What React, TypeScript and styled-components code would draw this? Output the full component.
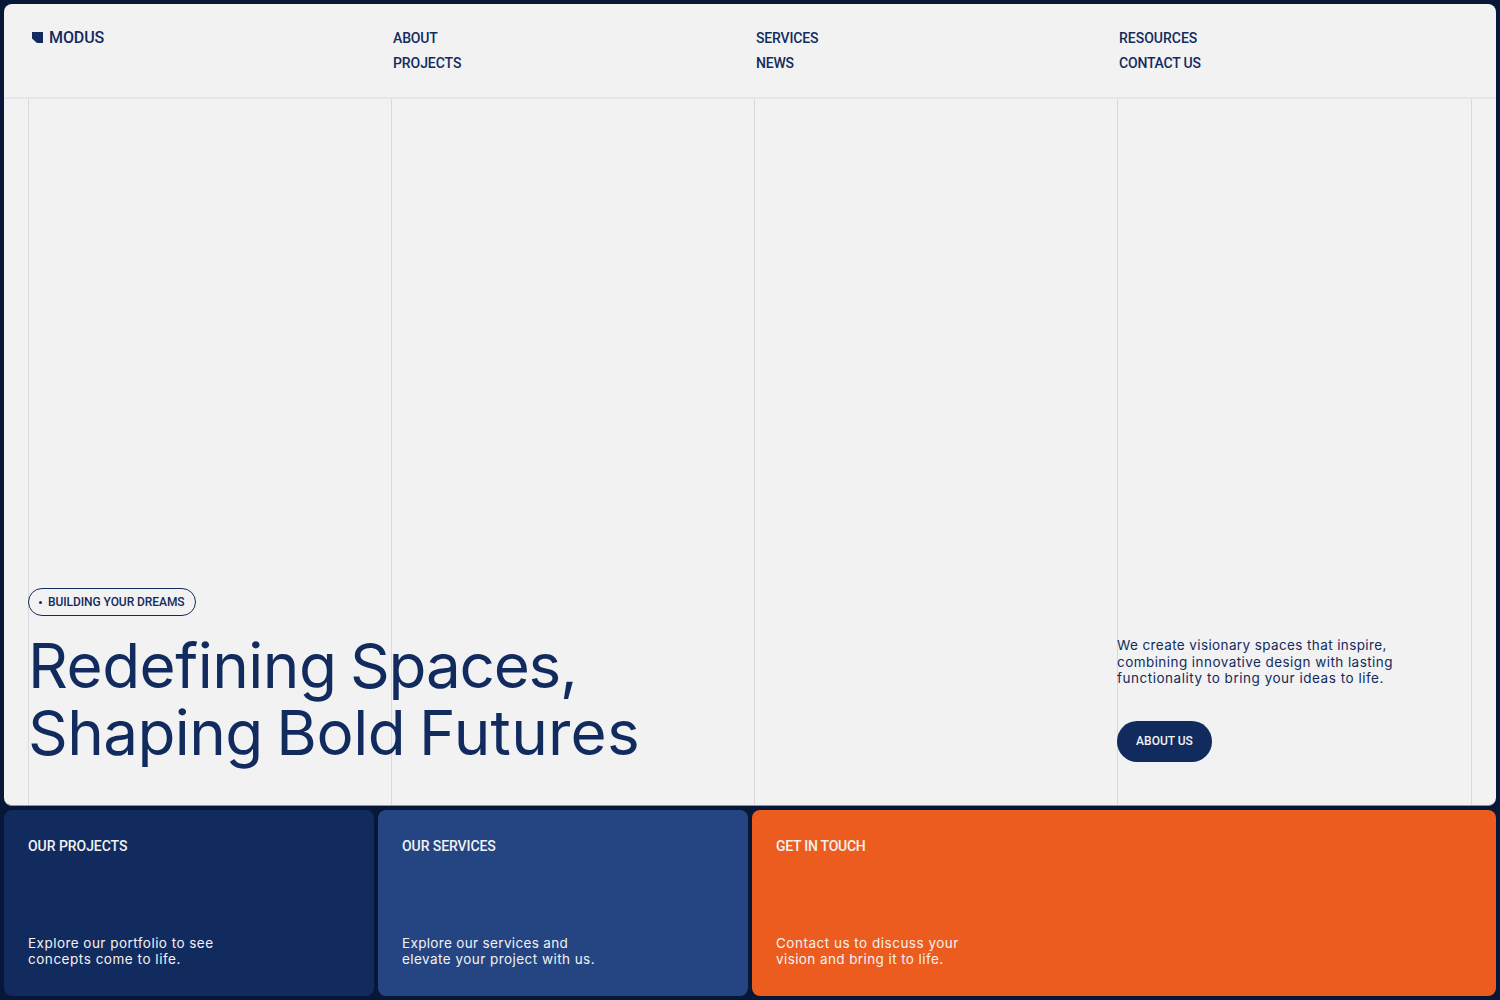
import React, { Fragment } from 'react';
import styled, { createGlobalStyle } from 'styled-components';

const color = {
  page: '#061737',
  paper: '#f2f2f2',
  navy: '#122b5e',
  blue: '#254582',
  orange: '#ec5c1e',
  line: '#dadade',
};

const labelFont = 'Roboto, "Liberation Sans", sans-serif';
const textFont = 'Inter, "Liberation Sans", sans-serif';

const GlobalStyle = createGlobalStyle`
  *, *::before, *::after { box-sizing: border-box; }
  body { margin: 0; background: ${color.page}; }
  h1, h2, p { margin: 0; }
  a { color: inherit; text-decoration: none; }
`;

const Page = styled.div`
  display: flex;
  flex-direction: column;
  gap: 4px;
  height: 1000px;
  padding: 4px;
  background: ${color.page};
  color: ${color.navy};
  font-family: ${textFont};
`;

const Panel = styled.main`
  display: flex;
  flex: 1;
  flex-direction: column;
  overflow: hidden;
  border-bottom: 1px solid #8d94a1;
  border-radius: 8px;
  background: ${color.paper};
`;

const Header = styled.header`
  display: grid;
  grid-template-columns: repeat(4, 1fr);
  column-gap: 8px;
  height: 95px;
  padding: 26px 24px 0;
  border-bottom: 2px solid #e6e6eb;
`;

const Logo = styled.a`
  display: flex;
  align-items: flex-start;
  align-self: start;
  gap: 6px;
  height: 16px;
  padding-left: 4px;
  font: 500 16px/16px ${labelFont};
  letter-spacing: -0.1px;
`;

const LogoMark = styled.svg`
  display: block;
  width: 11px;
  height: 11px;
  margin-top: 2px;
`;

const NavColumn = styled.nav`
  display: flex;
  flex-direction: column;
  align-items: flex-start;
  gap: 8px;
  padding-left: 2px;
`;

const NavLink = styled.a<{ $tracking: number }>`
  font: 500 14px/17px ${labelFont};
  letter-spacing: ${({ $tracking }) => $tracking}px;
`;

const Hero = styled.section`
  display: grid;
  flex: 1;
  padding: 0 24px;
`;

const columns = `
  display: grid;
  grid-area: 1 / 1;
  grid-template-columns: repeat(4, 1fr);
  column-gap: 8px;
`;

const Guides = styled.div`
  ${columns}
`;

const Guide = styled.div`
  border-left: 1px solid ${color.line};

  &:last-child {
    border-right: 1px solid ${color.line};
  }
`;

const HeroContent = styled.div`
  ${columns}
  align-items: end;
`;

const Intro = styled.div`
  display: flex;
  grid-column: span 3;
  flex-direction: column;
  align-items: flex-start;
  gap: 15.6px;
  padding-bottom: 38.2px;
`;

const Badge = styled.div`
  display: flex;
  align-items: center;
  gap: 6px;
  width: 168px;
  height: 28.4px;
  padding: 0 0 0 10px;
  border: 1px solid ${color.navy};
  border-radius: 15px;
  font: 500 12px/14.4px ${labelFont};
  letter-spacing: -0.07px;
  white-space: nowrap;
`;

const Dot = styled.span`
  width: 3px;
  height: 3px;
  border-radius: 50%;
  background: ${color.navy};
`;

const Title = styled.h1`
  font: 400 62px/67.2px ${textFont};
`;

const TitleLine = styled.span`
  display: block;
  word-spacing: -3.9px;
  white-space: nowrap;
`;

const Tracked = styled.span<{ $tracking: number }>`
  letter-spacing: ${({ $tracking }) => $tracking}px;
`;

const Aside = styled.div`
  display: flex;
  flex-direction: column;
  align-items: flex-start;
  gap: 34.1px;
  padding-bottom: 43px;
`;

const Copy = styled.p<{ $leading: number }>`
  font: 400 13.5px ${textFont};
  line-height: ${({ $leading }) => $leading}px;
`;

const CopyLine = styled.span<{ $tracking: number }>`
  display: block;
  letter-spacing: ${({ $tracking }) => $tracking}px;
  white-space: nowrap;
`;

const Button = styled.a`
  display: flex;
  align-items: center;
  justify-content: center;
  width: 95px;
  height: 40.4px;
  border-radius: 20.2px;
  background: ${color.navy};
  color: ${color.paper};
  font: 500 12px/14.4px ${labelFont};
`;

const Cards = styled.section`
  display: grid;
  grid-template-columns: repeat(4, 1fr);
  gap: 4px;
  height: 186.4px;
`;

const Card = styled.a<{ $fill: string; $span?: number }>`
  display: flex;
  grid-column: span ${({ $span = 1 }) => $span};
  flex-direction: column;
  justify-content: space-between;
  padding: 28px 24px 29.2px;
  border-radius: 8px;
  background: ${({ $fill }) => $fill};
  color: ${color.paper};
`;

const CardTitle = styled.h2<{ $tracking: number }>`
  font: 500 14px/17px ${labelFont};
  letter-spacing: ${({ $tracking }) => $tracking}px;
`;

type Line = { text: string; tracking: number };

const nav: Line[][] = [
  [{ text: 'ABOUT', tracking: -0.15 }, { text: 'PROJECTS', tracking: -0.08 }],
  [{ text: 'SERVICES', tracking: -0.15 }, { text: 'NEWS', tracking: -0.2 }],
  [{ text: 'RESOURCES', tracking: 0 }, { text: 'CONTACT US', tracking: -0.2 }],
];

const headline: Line[][] = [
  [{ text: 'Redefining', tracking: -0.5 }, { text: 'Spaces,', tracking: -1.25 }],
  [{ text: 'Shaping', tracking: -0.6 }, { text: 'Bold', tracking: -0.4 }, { text: 'Futures', tracking: 0.25 }],
];

const summary: Line[] = [
  { text: 'We create visionary spaces that inspire,', tracking: 0.387 },
  { text: 'combining innovative design with lasting', tracking: 0.44 },
  { text: 'functionality to bring your ideas to life.', tracking: 0.52 },
];

const cards: { title: Line; fill: string; span?: number; lines: Line[] }[] = [
  {
    title: { text: 'OUR PROJECTS', tracking: -0.05 },
    fill: color.navy,
    lines: [
      { text: 'Explore our portfolio to see', tracking: 0.465 },
      { text: 'concepts come to life.', tracking: 0.532 },
    ],
  },
  {
    title: { text: 'OUR SERVICES', tracking: -0.08 },
    fill: color.blue,
    lines: [
      { text: 'Explore our services and', tracking: 0.335 },
      { text: 'elevate your project with us.', tracking: 0.454 },
    ],
  },
  {
    title: { text: 'GET IN TOUCH', tracking: -0.25 },
    fill: color.orange,
    span: 2,
    lines: [
      { text: 'Contact us to discuss your', tracking: 0.5 },
      { text: 'vision and bring it to life.', tracking: 0.404 },
    ],
  },
];

function Lines({ lines, leading }: { lines: Line[]; leading: number }) {
  return (
    <Copy $leading={leading}>
      {lines.map((line) => (
        <CopyLine key={line.text} $tracking={line.tracking}>{line.text}</CopyLine>
      ))}
    </Copy>
  );
}

export default function App() {
  return (
    <Page>
      <GlobalStyle />
      <Panel>
        <Header>
          <Logo href="#">
            <LogoMark viewBox="0 0 11 11" aria-hidden="true">
              <path d="M0 0H11V11H5L0 6.5Z" fill={color.navy} />
            </LogoMark>
            MODUS
          </Logo>
          {nav.map((links) => (
            <NavColumn key={links[0].text}>
              {links.map((link) => (
                <NavLink key={link.text} href="#" $tracking={link.tracking}>{link.text}</NavLink>
              ))}
            </NavColumn>
          ))}
        </Header>
        <Hero>
          <Guides>
            <Guide />
            <Guide />
            <Guide />
            <Guide />
          </Guides>
          <HeroContent>
            <Intro>
              <Badge>
                <Dot />
                BUILDING YOUR DREAMS
              </Badge>
              <Title>
                {headline.map((words) => (
                  <TitleLine key={words[0].text}>
                    {words.map((word, index) => (
                      <Fragment key={word.text}>
                        {index > 0 && ' '}
                        <Tracked $tracking={word.tracking}>{word.text}</Tracked>
                      </Fragment>
                    ))}
                  </TitleLine>
                ))}
              </Title>
            </Intro>
            <Aside>
              <Lines lines={summary} leading={16.8} />
              <Button href="#">ABOUT US</Button>
            </Aside>
          </HeroContent>
        </Hero>
      </Panel>
      <Cards>
        {cards.map((card) => (
          <Card key={card.title.text} href="#" $fill={card.fill} $span={card.span}>
            <CardTitle $tracking={card.title.tracking}>{card.title.text}</CardTitle>
            <Lines lines={card.lines} leading={16} />
          </Card>
        ))}
      </Cards>
    </Page>
  );
}
